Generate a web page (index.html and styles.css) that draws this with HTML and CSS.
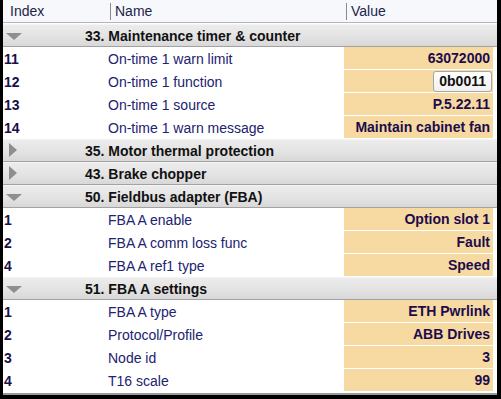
FILE: index.html
```html
<!DOCTYPE html>
<html>
<head>
<meta charset="utf-8">
<link rel="stylesheet" href="styles.css">
</head>
<body>
<div class="panel">
  <div class="head">
    <div class="hcell first">Index</div>
    <div class="hcell"><span class="sep">Name</span></div>
    <div class="hcell"><span class="sep">Value</span></div>
  </div>

  <div class="group"><span class="tri down"></span><span class="gtitle">33. Maintenance timer &amp; counter</span></div>
  <div class="row"><span class="idx">11</span><span class="name">On-time 1 warn limit</span><span class="val">63072000</span></div>
  <div class="row"><span class="idx">12</span><span class="name">On-time 1 function</span><span class="val"><span class="btn">0b0011</span></span></div>
  <div class="row"><span class="idx">13</span><span class="name">On-time 1 source</span><span class="val">P.5.22.11</span></div>
  <div class="row"><span class="idx">14</span><span class="name">On-time 1 warn message</span><span class="val">Maintain cabinet fan</span></div>

  <div class="group"><span class="tri right"></span><span class="gtitle">35. Motor thermal protection</span></div>
  <div class="group"><span class="tri right"></span><span class="gtitle">43. Brake chopper</span></div>

  <div class="group"><span class="tri down"></span><span class="gtitle">50. Fieldbus adapter (FBA)</span></div>
  <div class="row"><span class="idx">1</span><span class="name">FBA A enable</span><span class="val">Option slot 1</span></div>
  <div class="row"><span class="idx">2</span><span class="name">FBA A comm loss func</span><span class="val">Fault</span></div>
  <div class="row"><span class="idx">4</span><span class="name">FBA A ref1 type</span><span class="val">Speed</span></div>

  <div class="group"><span class="tri down"></span><span class="gtitle">51. FBA A settings</span></div>
  <div class="row"><span class="idx">1</span><span class="name">FBA A type</span><span class="val">ETH Pwrlink</span></div>
  <div class="row"><span class="idx">2</span><span class="name">Protocol/Profile</span><span class="val">ABB Drives</span></div>
  <div class="row"><span class="idx">3</span><span class="name">Node id</span><span class="val">3</span></div>
  <div class="row"><span class="idx">4</span><span class="name">T16 scale</span><span class="val">99</span></div>
</div>
</body>
</html>
```
FILE: styles.css
```css
html, body {
  margin: 0;
  padding: 0;
  background: #000;
  height: 399px;
  overflow: hidden;
}
body {
  font-family: "Liberation Sans", Arial, sans-serif;
  font-size: 14px;
}
.panel {
  margin-left: 3px;
  width: 494px;
  background: #fff;
  padding-bottom: 1px;
  border-bottom: 2px solid #9a9a9a;
}
.head {
  display: grid;
  grid-template-columns: 107px 236px 1fr;
  height: 22px;
  background: #f6f8fb;
  border-bottom: 1px solid #b4b4b4;
  margin-bottom: 1px;
  color: #1c2448;
}
.hcell {
  display: flex;
  align-items: center;
  height: 22px;
}
.hcell.first {
  padding-left: 7px;
}
.sep {
  display: block;
  border-left: 1px solid #8a8a8a;
  padding-left: 4px;
  line-height: 17px;
}
.group {
  display: flex;
  align-items: center;
  height: 21px;
  background: linear-gradient(to bottom, #ececec 0%, #e2e2e2 60%, #d8d8d8 100%);
  border-top: 1px solid #f4f4f4;
  border-bottom: 1px solid #a2a2a2;
  font-weight: bold;
  color: #111;
}
.tri {
  width: 82px;
  flex: none;
  position: relative;
  height: 21px;
}
.tri::before {
  content: "";
  position: absolute;
  width: 0;
  height: 0;
}
.tri.down::before {
  left: 3px;
  top: 8px;
  border-left: 8px solid transparent;
  border-right: 8px solid transparent;
  border-top: 7px solid #8e8e8e;
}
.tri.right::before {
  left: 6px;
  top: 3px;
  border-top: 7px solid transparent;
  border-bottom: 7px solid transparent;
  border-left: 8px solid #8e8e8e;
}
.row {
  display: grid;
  grid-template-columns: 105px 236px 149px;
  height: 23px;
  padding-right: 4px;
  align-items: stretch;
}
.idx {
  display: flex;
  align-items: center;
  padding-left: 1px;
  font-weight: bold;
  color: #1a0e48;
}
.name {
  display: flex;
  align-items: center;
  color: #222270;
}
.val {
  display: flex;
  align-items: center;
  justify-content: flex-end;
  background: #f7d9a2;
  border-bottom: 1px solid #fff;
  padding-right: 3px;
  font-weight: bold;
  color: #1c0c4c;
}
.btn {
  display: inline-flex;
  align-items: center;
  height: 19px;
  padding: 0 5px;
  margin-right: -2px;
  background: linear-gradient(to bottom, #ffffff, #f0f0f0);
  border: 1px solid #a6a6a6;
  border-radius: 3px;
  color: #111;
}
```
